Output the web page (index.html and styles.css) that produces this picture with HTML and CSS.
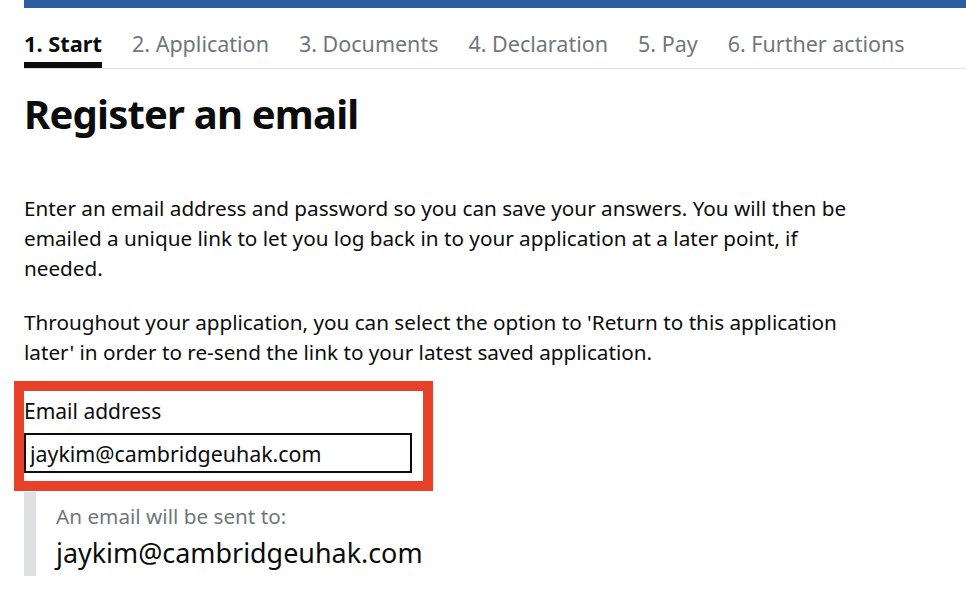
FILE: index.html
```html
<!DOCTYPE html>
<html lang="en">
<head>
<meta charset="utf-8">
<title>Register an email</title>
<link rel="stylesheet" href="styles.css">
</head>
<body>
<div class="page">
  <div class="topbar"></div>
  <nav class="steps">
    <span class="step current">1. Start</span>
    <span class="step">2. Application</span>
    <span class="step">3. Documents</span>
    <span class="step">4. Declaration</span>
    <span class="step">5. Pay</span>
    <span class="step">6. Further actions</span>
  </nav>
  <main class="content">
    <h1 class="title">Register an email</h1>
    <p class="body">Enter an email address and password so you can save your answers. You will then be emailed a unique link to let you log back in to your application at a later point, if needed.</p>
    <p class="body">Throughout your application, you can select the option to 'Return to this application later' in order to re-send the link to your latest saved application.</p>
    <div class="highlight">
      <label class="label" for="email">Email address</label>
      <input class="input" id="email" type="text" value="jaykim@cambridgeuhak.com">
    </div>
    <div class="inset">
      <div class="inset-hint">An email will be sent to:</div>
      <div class="inset-email">jaykim@cambridgeuhak.com</div>
    </div>
  </main>
</div>
</body>
</html>
```
FILE: styles.css
```css
html, body {
  margin: 0;
  padding: 0;
  background: #ffffff;
}
body {
  font-family: "Noto Sans", "Liberation Sans", Arial, sans-serif;
  color: #0b0c0c;
  overflow: hidden;
}
.page {
  padding-left: 24px;
}
.topbar {
  height: 8px;
  background: #2a5ca0;
}
.steps {
  display: flex;
  gap: 30px;
  border-bottom: 1px solid #dee0e2;
  padding-top: 22px;
}
.step {
  font-size: 21.5px;
  line-height: 27px;
  color: #6f777b;
  padding-bottom: 5px;
  border-bottom: 6px solid transparent;
  white-space: nowrap;
}
.step.current {
  color: #0b0c0c;
  font-weight: 700;
  font-size: 21.8px;
  border-bottom-color: #0b0c0c;
}
.content {
  max-width: 836px;
}
.title {
  font-size: 40px;
  line-height: 50px;
  font-weight: 700;
  margin: 20px 0 0 0;
  letter-spacing: -0.8px;
}
.body {
  font-size: 20.7px;
  line-height: 30px;
  margin: 54px 0 0 0;
}
.body + .body {
  margin-top: 24px;
}
.highlight {
  margin: 14px 0 0 -10px;
  width: 399px;
  border: 10px solid #e8412a;
  padding: 6px 0 8px 0;
}
.label {
  display: block;
  font-size: 21px;
  line-height: 28px;
  margin-bottom: 8px;
}
.input {
  display: block;
  box-sizing: border-box;
  width: 388px;
  height: 40px;
  border: 2px solid #0b0c0c;
  padding: 0 4px;
  font-family: inherit;
  font-size: 21.4px;
  color: #0b0c0c;
  background: #ffffff;
  outline: none;
}
.inset {
  margin-top: 1px;
  border-left: 12px solid #dee0e2;
  padding: 10px 0 5px 20px;
}
.inset-hint {
  font-size: 20.7px;
  line-height: 28px;
  color: #6f777b;
}
.inset-email {
  font-size: 26.9px;
  line-height: 36px;
  margin-top: 5px;
}
```
